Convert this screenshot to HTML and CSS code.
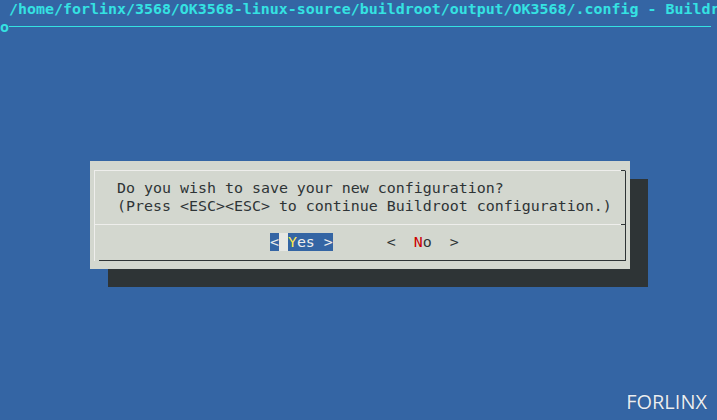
FILE: index.html
```html
<!DOCTYPE html>
<html>
<head>
<meta charset="utf-8">
<link rel="stylesheet" href="styles.css">
</head>
<body>
<div class="screen">
  <div class="title"> /home/forlinx/3568/OK3568-linux-source/buildroot/output/OK3568/.config - Buildr</div>
  <div class="rule-row"><span class="rule-o">o</span><div class="rule"></div></div>
  <div class="dialog">
    <div class="frame">
      <div class="msg">
        <div class="line">Do you wish to save your new configuration?</div>
        <div class="line">(Press &lt;ESC&gt;&lt;ESC&gt; to continue Buildroot configuration.)</div>
      </div>
      <div class="sep"></div>
      <div class="buttons"><span>                   </span><span class="btn-active">&lt;<span class="cursor"> </span><span class="label"><span class="hk-y">Y</span>es</span> &gt;</span><span>      &lt;  </span><span class="label"><span class="hk-n">N</span>o</span><span>  &gt;</span></div>
      <div class="bottom-line"></div>
    </div>
  </div>
  <div class="watermark">FORLINX</div>
</div>
</body>
</html>
```
FILE: styles.css
```css
html, body {
  margin: 0;
  padding: 0;
}
body {
  width: 717px;
  height: 420px;
  overflow: hidden;
  background: #3465a4;
}
.screen {
  position: relative;
  width: 717px;
  height: 420px;
  overflow: hidden;
  background: #3465a4;
  font-family: "DejaVu Sans Mono", monospace;
  font-size: 14.95px;
  line-height: 18px;
}
.title {
  height: 18px;
  color: #34e2e2;
  font-weight: bold;
  white-space: pre;
  overflow: hidden;
}
.rule-row {
  display: flex;
  height: 18px;
  align-items: flex-start;
}
.rule-o {
  width: 9px;
  color: #34e2e2;
  font-weight: bold;
}
.rule {
  width: 702px;
  height: 1px;
  margin-top: 8px;
  background: #34e2e2;
}
.dialog {
  margin: 125px 0 0 90px;
  width: 540px;
  height: 108px;
  background: #d3d7cf;
  box-shadow: 18px 18px 0 #2e3436;
  color: #2e3436;
  overflow: hidden;
}
.frame {
  position: relative;
  box-sizing: border-box;
  width: 532px;
  margin: 9px 0 0 4px;
  border-top: 1px solid #eeeeec;
  border-left: 1px solid #eeeeec;
  border-right: 1px solid #2e3436;
}
.frame::before {
  content: "";
  position: absolute;
  top: -1px;
  right: 0;
  width: 4px;
  height: 1px;
  background: #2e3436;
}
.msg {
  padding: 8px 0 0 22px;
}
.line {
  height: 18px;
  white-space: pre;
}
.sep {
  position: relative;
  margin-top: 9px;
  height: 1px;
  background: #eeeeec;
}
.sep::after {
  content: "";
  position: absolute;
  top: 0;
  right: 0;
  width: 4px;
  height: 1px;
  background: #2e3436;
}
.buttons {
  margin-top: 8px;
  height: 18px;
  padding-left: 4px;
  white-space: pre;
}
.btn-active {
  background: #3465a4;
  color: #eeeeec;
}
.cursor {
  background: #e6e7e3;
}
.label {
  font-weight: normal;
}
.hk-y {
  color: #fce94f;
}
.hk-n {
  color: #cc0000;
}
.bottom-line {
  margin: 9px 0 0 4px;
  height: 1px;
  background: #2e3436;
}
.watermark {
  position: absolute;
  right: 10px;
  bottom: 6px;
  font-family: "Open Sans", "Liberation Sans", sans-serif;
  font-size: 20px;
  line-height: 24px;
  color: #e9eef4;
  text-shadow: 0 0 1px rgba(0,0,0,0.35);
}
```
